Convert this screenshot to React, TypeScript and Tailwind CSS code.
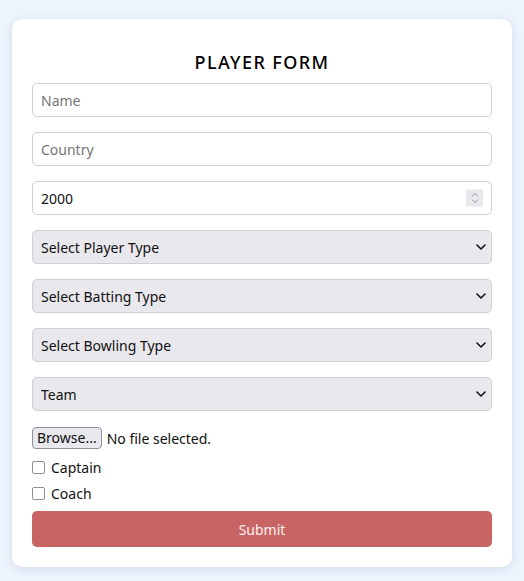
import { useState } from 'react'

const font = { fontFamily: '"Noto Sans", "Open Sans", sans-serif' }

function Chevron() {
  return (
    <svg width="10" height="6" viewBox="0 0 10 6" className="pointer-events-none absolute right-[6px] top-1/2 -translate-y-1/2">
      <path d="M1 1l4 4 4-4" fill="none" stroke="#111" strokeWidth="1.6" strokeLinecap="round" strokeLinejoin="round" />
    </svg>
  )
}

function SelectBox({ label }: { label: string }) {
  return (
    <div className="relative">
      <select className="w-full h-[34px] appearance-none rounded-[5px] border border-[#cfcfd4] bg-[#e9e8ed] pl-2 pr-6 text-[14px] text-[#111] outline-none">
        <option>{label}</option>
      </select>
      <Chevron />
    </div>
  )
}

function Check({ label }: { label: string }) {
  const [on, setOn] = useState(false)
  return (
    <label className="flex items-center gap-[6px] text-[14px] text-[#111] h-[18px] cursor-pointer" onClick={() => setOn(!on)}>
      <span className="w-[13px] h-[13px] rounded-[2px] border-[1.5px] border-[#8f8f9d] bg-white flex items-center justify-center text-[10px] leading-none">
        {on ? '✓' : ''}
      </span>
      {label}
    </label>
  )
}

export default function App() {
  const [year, setYear] = useState('2000')
  return (
    <div className="min-h-[581px] bg-[#eef4fd] px-3 pt-[19px] pb-[14px]" style={font}>
      <div className="bg-white rounded-[10px] shadow-[0_2px_8px_rgba(120,140,170,0.25)] px-5 pt-[30px] pb-5">
        <h1 className="text-center text-[18px] leading-[26px] font-medium tracking-[1.4px] text-black mb-[8px]">PLAYER FORM</h1>
        <div className="flex flex-col gap-[15px]">
          <input
            placeholder="Name"
            className="w-full h-[34px] rounded-[5px] border border-[#cfcfd4] px-2 text-[14px] placeholder:text-[#757575] outline-none"
          />
          <input
            placeholder="Country"
            className="w-full h-[34px] rounded-[5px] border border-[#cfcfd4] px-2 text-[14px] placeholder:text-[#757575] outline-none"
          />
          <div className="relative">
            <input
              value={year}
              onChange={(e) => setYear(e.target.value)}
              className="w-full h-[34px] rounded-[5px] border border-[#cfcfd4] px-2 text-[14px] text-[#111] outline-none"
            />
            <div className="absolute right-[9px] top-1/2 -translate-y-1/2 w-[17px] h-[17px] bg-[#e9e8ed] flex flex-col items-center justify-center gap-[1px]">
              <svg width="8" height="5" viewBox="0 0 8 5"><path d="M1 4l3-3 3 3" fill="none" stroke="#8f8f9d" strokeWidth="1" /></svg>
              <svg width="8" height="5" viewBox="0 0 8 5"><path d="M1 1l3 3 3-3" fill="none" stroke="#8f8f9d" strokeWidth="1" /></svg>
            </div>
          </div>
          <SelectBox label="Select Player Type" />
          <SelectBox label="Select Batting Type" />
          <SelectBox label="Select Bowling Type" />
          <SelectBox label="Team" />
        </div>
        <div className="mt-[16px] flex items-center gap-[5px] text-[14px] text-[#111]">
          <button className="h-[22px] px-[4px] rounded-[4px] border border-[#8f8f9d] bg-[#e9e8ed] text-[14px] leading-none">Browse...</button>
          <span>No file selected.</span>
        </div>
        <div className="mt-[9px] flex flex-col gap-[8px]">
          <Check label="Captain" />
          <Check label="Coach" />
        </div>
        <button className="mt-[9px] w-full h-[36px] rounded-[5px] bg-[#c86464] text-white/90 text-[14px]">Submit</button>
      </div>
    </div>
  )
}
